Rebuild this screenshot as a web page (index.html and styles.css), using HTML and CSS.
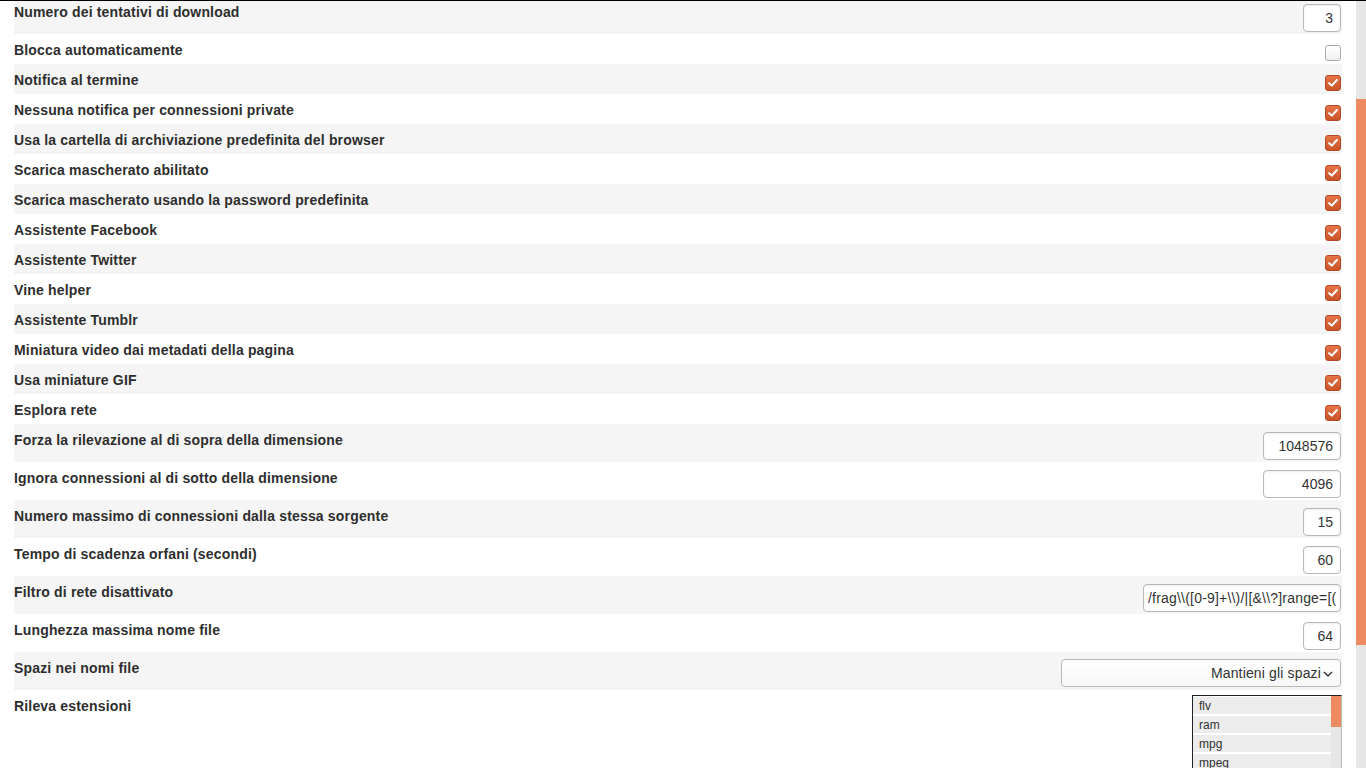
FILE: index.html
```html
<!DOCTYPE html>
<html lang="it">
<head>
<meta charset="utf-8">
<title>Impostazioni</title>
<link rel="stylesheet" href="styles.css">
</head>
<body>
<div class="page">
  <div class="main">
    <div class="list">
      <div class="row inp"><span class="label">Numero dei tentativi di download</span><input class="field w38" type="text" value="3"></div>
      <div class="row chk"><span class="label">Blocca automaticamente</span><span class="cb"></span></div>
      <div class="row chk"><span class="label">Notifica al termine</span><span class="cb on"><svg viewBox="0 0 16 16"><polyline points="3.6,8.2 6.6,11 12.4,4.6"/></svg></span></div>
      <div class="row chk"><span class="label">Nessuna notifica per connessioni private</span><span class="cb on"><svg viewBox="0 0 16 16"><polyline points="3.6,8.2 6.6,11 12.4,4.6"/></svg></span></div>
      <div class="row chk"><span class="label">Usa la cartella di archiviazione predefinita del browser</span><span class="cb on"><svg viewBox="0 0 16 16"><polyline points="3.6,8.2 6.6,11 12.4,4.6"/></svg></span></div>
      <div class="row chk"><span class="label">Scarica mascherato abilitato</span><span class="cb on"><svg viewBox="0 0 16 16"><polyline points="3.6,8.2 6.6,11 12.4,4.6"/></svg></span></div>
      <div class="row chk"><span class="label">Scarica mascherato usando la password predefinita</span><span class="cb on"><svg viewBox="0 0 16 16"><polyline points="3.6,8.2 6.6,11 12.4,4.6"/></svg></span></div>
      <div class="row chk"><span class="label">Assistente Facebook</span><span class="cb on"><svg viewBox="0 0 16 16"><polyline points="3.6,8.2 6.6,11 12.4,4.6"/></svg></span></div>
      <div class="row chk"><span class="label">Assistente Twitter</span><span class="cb on"><svg viewBox="0 0 16 16"><polyline points="3.6,8.2 6.6,11 12.4,4.6"/></svg></span></div>
      <div class="row chk"><span class="label">Vine helper</span><span class="cb on"><svg viewBox="0 0 16 16"><polyline points="3.6,8.2 6.6,11 12.4,4.6"/></svg></span></div>
      <div class="row chk"><span class="label">Assistente Tumblr</span><span class="cb on"><svg viewBox="0 0 16 16"><polyline points="3.6,8.2 6.6,11 12.4,4.6"/></svg></span></div>
      <div class="row chk"><span class="label">Miniatura video dai metadati della pagina</span><span class="cb on"><svg viewBox="0 0 16 16"><polyline points="3.6,8.2 6.6,11 12.4,4.6"/></svg></span></div>
      <div class="row chk"><span class="label">Usa miniature GIF</span><span class="cb on"><svg viewBox="0 0 16 16"><polyline points="3.6,8.2 6.6,11 12.4,4.6"/></svg></span></div>
      <div class="row chk"><span class="label">Esplora rete</span><span class="cb on"><svg viewBox="0 0 16 16"><polyline points="3.6,8.2 6.6,11 12.4,4.6"/></svg></span></div>
      <div class="row inp"><span class="label">Forza la rilevazione al di sopra della dimensione</span><input class="field w78" type="text" value="1048576"></div>
      <div class="row inp"><span class="label">Ignora connessioni al di sotto della dimensione</span><input class="field w78" type="text" value="4096"></div>
      <div class="row inp"><span class="label">Numero massimo di connessioni dalla stessa sorgente</span><input class="field w38" type="text" value="15"></div>
      <div class="row inp"><span class="label">Tempo di scadenza orfani (secondi)</span><input class="field w38" type="text" value="60"></div>
      <div class="row inp"><span class="label">Filtro di rete disattivato</span><input class="field w198 left" type="text" value="/frag\\([0-9]+\\)/|[&amp;\\?]range=[(0-9]+-[0-9]+|/silverlight/"></div>
      <div class="row inp"><span class="label">Lunghezza massima nome file</span><input class="field w38" type="text" value="64"></div>
      <div class="row inp"><span class="label">Spazi nei nomi file</span><div class="select"><span>Mantieni gli spazi</span><svg class="chev" viewBox="0 0 10 6"><polyline points="1,1 5,5 9,1"/></svg></div></div>
      <div class="row ext"><span class="label">Rileva estensioni</span>
        <div class="listbox">
          <div class="items">
            <div class="item">flv</div>
            <div class="item">ram</div>
            <div class="item">mpg</div>
            <div class="item">mpeg</div>
            <div class="item">avi</div>
            <div class="item">rm</div>
          </div>
          <div class="lb-scroll"><div class="lb-thumb"></div></div>
        </div>
      </div>
    </div>
  </div>
  <div class="scrollbar"><div class="thumb"></div></div>
</div>
</body>
</html>
```

FILE: styles.css
```css
html, body {
  margin: 0;
  padding: 0;
  height: 100%;
  overflow: hidden;
  background: #fff;
}
body {
  font-family: "Liberation Sans", Arial, sans-serif;
  color: #333;
}
.page {
  display: flex;
  height: 767px;
  border-top: 1px solid #000;
  overflow: hidden;
}
.main {
  flex: 1;
  padding: 0 14px;
  overflow: hidden;
}
.list {
  margin-top: -5px;
}
.row {
  display: flex;
  justify-content: space-between;
  align-items: flex-start;
  box-sizing: border-box;
}
.row:nth-child(odd) {
  background: #f5f5f5;
}
.row.inp { height: 38px; }
.row.chk { height: 30px; }
.row.ext { height: 200px; }
.label {
  font-size: 14px;
  font-weight: bold;
  line-height: 20px;
  margin-top: 6px;
  color: #2e2e2e;
  letter-spacing: 0.17px;
}
.field {
  margin: 8px 1px 0 0;
  box-sizing: border-box;
  height: 28px;
  border: 1px solid #b8b8b8;
  border-radius: 4px;
  box-shadow: inset 0 1px 2px rgba(0,0,0,0.08);
  background: #fff;
  font-family: "Liberation Sans", Arial, sans-serif;
  font-size: 14px;
  color: #333;
  text-align: right;
  padding: 0 7px;
  outline: none;
}
.field.left { text-align: left; padding: 0 4px; letter-spacing: 0.2px; }
.w38 { width: 38px; }
.w78 { width: 78px; }
.w198 { width: 198px; }
.cb {
  margin: 11px 1px 0 0;
  box-sizing: border-box;
  width: 16px;
  height: 16px;
  border: 1px solid #aaa;
  border-radius: 3px;
  background: linear-gradient(#fff, #f0f0f0);
  display: flex;
}
.cb.on {
  border-color: #b14a22;
  background: linear-gradient(#e67447, #c9542a);
}
.cb svg {
  width: 14px;
  height: 14px;
}
.cb svg polyline {
  fill: none;
  stroke: #fff;
  stroke-width: 2.3;
  stroke-linecap: round;
  stroke-linejoin: round;
}
.select {
  margin: 7px 1px 0 0;
  box-sizing: border-box;
  width: 280px;
  height: 28px;
  border: 1px solid #b8b8b8;
  border-radius: 4px;
  background: linear-gradient(#fff, #f7f7f7);
  display: flex;
  align-items: center;
  justify-content: flex-end;
  padding-right: 7px;
  font-size: 14px;
  color: #333;
  letter-spacing: 0.15px;
}
.chev {
  width: 10px;
  height: 6px;
  margin-left: 2px;
  margin-top: 1px;
}
.chev polyline {
  fill: none;
  stroke: #333;
  stroke-width: 1.4;
}
.listbox {
  margin-top: 5px;
  width: 150px;
  height: 150px;
  box-sizing: border-box;
  border: 1px solid #222;
  border-right-color: #bbb;
  display: flex;
  background: #fff;
}
.items {
  flex: 1;
  display: flex;
  flex-direction: column;
  gap: 2px;
  padding-top: 1px;
}
.item {
  height: 17px;
  line-height: 19px;
  background: #ececec;
  font-size: 12px;
  color: #333;
  padding-left: 6px;
}
.lb-scroll {
  width: 10px;
  background: #e6e6e6;
}
.lb-thumb {
  height: 31px;
  background: #ee8a5f;
}
.scrollbar {
  width: 10px;
  background: #e6e6e6;
  flex: none;
}
.scrollbar .thumb {
  margin-top: 98px;
  height: 546px;
  background: #ee8a5f;
}
```
